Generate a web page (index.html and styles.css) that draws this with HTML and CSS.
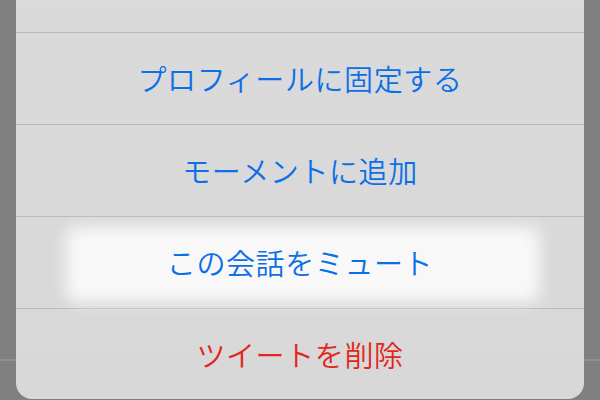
FILE: index.html
```html
<!DOCTYPE html>
<html lang="ja">
<head>
<meta charset="utf-8">
<link rel="stylesheet" href="styles.css">
</head>
<body>
<div class="sheet">
  <div class="row top"></div>
  <div class="row"><span class="label">プロフィールに固定する</span></div>
  <div class="row"><span class="label">モーメントに追加</span></div>
  <div class="row pressed"><span class="label">この会話をミュート</span></div>
  <div class="row last"><span class="label danger">ツイートを削除</span></div>
</div>
</body>
</html>
```
FILE: styles.css
```css
html, body {
  margin: 0;
  padding: 0;
}
body {
  width: 600px;
  height: 400px;
  overflow: hidden;
  background: linear-gradient(to bottom, #808080 0, #808080 359px, #8e8e8e 359px, #8e8e8e 361px, #808080 361px);
  font-family: "Noto Sans CJK JP", "Noto Sans", sans-serif;
}
.sheet {
  margin: 0 16px;
  height: 399px;
  background: linear-gradient(to bottom, #dadada, #d8d8d8);
  border-radius: 0 0 16px 16px;
  overflow: hidden;
  display: flex;
  flex-direction: column;
}
.row {
  height: 91px;
  border-bottom: 1px solid #b9b9bd;
  display: flex;
  align-items: center;
  justify-content: center;
  position: relative;
  flex: none;
}
.row.top {
  height: 32px;
}
.row.last {
  border-bottom: none;
  flex: 1;
}
.label {
  position: relative;
  font-size: 29px;
  line-height: 1;
  color: #0c6fe8;
  letter-spacing: 0.6px;
  font-weight: 350;
}
.label.danger {
  color: #e2261d;
}
.pressed::before {
  content: "";
  position: absolute;
  left: 50px;
  right: 44px;
  top: 10px;
  bottom: 6px;
  background: #f8f8f8;
  border-radius: 10px;
  filter: blur(8px);
}
```
